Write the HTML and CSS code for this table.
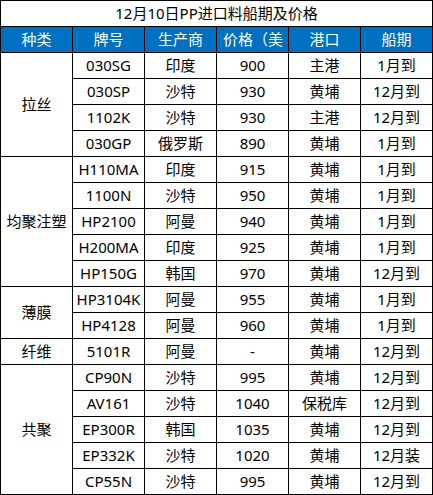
FILE: index.html
```html
<!DOCTYPE html>
<html lang="zh-CN">
<head>
  <meta charset="UTF-8" />
  <meta name="viewport" content="width=device-width, initial-scale=1.0" />
  <title>12月10日PP进口料船期及价格</title>
  <link rel="stylesheet" href="styles.css">
</head>
<body>

  <div class="sheet">
    <div class="cell title">12月10日PP进口料船期及价格</div>

    <div class="cell head">种类</div>
    <div class="cell head">牌号</div>
    <div class="cell head">生产商</div>
    <div class="cell head head-left">价格（美</div>
    <div class="cell head">港口</div>
    <div class="cell head">船期</div>

    <div class="cell group span-4">拉丝</div>
    <div class="cell">030SG</div><div class="cell">印度</div><div class="cell">900</div><div class="cell">主港</div><div class="cell">1月到</div>
    <div class="cell">030SP</div><div class="cell">沙特</div><div class="cell">930</div><div class="cell">黄埔</div><div class="cell">12月到</div>
    <div class="cell">1102K</div><div class="cell">沙特</div><div class="cell">930</div><div class="cell">主港</div><div class="cell">12月到</div>
    <div class="cell">030GP</div><div class="cell">俄罗斯</div><div class="cell">890</div><div class="cell">黄埔</div><div class="cell">1月到</div>

    <div class="cell group span-5">均聚注塑</div>
    <div class="cell">H110MA</div><div class="cell">印度</div><div class="cell">915</div><div class="cell">黄埔</div><div class="cell">1月到</div>
    <div class="cell">1100N</div><div class="cell">沙特</div><div class="cell">950</div><div class="cell">黄埔</div><div class="cell">1月到</div>
    <div class="cell">HP2100</div><div class="cell">阿曼</div><div class="cell">940</div><div class="cell">黄埔</div><div class="cell">1月到</div>
    <div class="cell">H200MA</div><div class="cell">印度</div><div class="cell">925</div><div class="cell">黄埔</div><div class="cell">1月到</div>
    <div class="cell">HP150G</div><div class="cell">韩国</div><div class="cell">970</div><div class="cell">黄埔</div><div class="cell">12月到</div>

    <div class="cell group span-2">薄膜</div>
    <div class="cell">HP3104K</div><div class="cell">阿曼</div><div class="cell">955</div><div class="cell">黄埔</div><div class="cell">1月到</div>
    <div class="cell">HP4128</div><div class="cell">阿曼</div><div class="cell">960</div><div class="cell">黄埔</div><div class="cell">1月到</div>

    <div class="cell group">纤维</div>
    <div class="cell">5101R</div><div class="cell">阿曼</div><div class="cell">-</div><div class="cell">黄埔</div><div class="cell">12月到</div>

    <div class="cell group span-5">共聚</div>
    <div class="cell">CP90N</div><div class="cell">沙特</div><div class="cell">995</div><div class="cell">黄埔</div><div class="cell">12月到</div>
    <div class="cell">AV161</div><div class="cell">沙特</div><div class="cell">1040</div><div class="cell">保税库</div><div class="cell">12月到</div>
    <div class="cell">EP300R</div><div class="cell">韩国</div><div class="cell">1035</div><div class="cell">黄埔</div><div class="cell">12月到</div>
    <div class="cell">EP332K</div><div class="cell">沙特</div><div class="cell">1020</div><div class="cell">黄埔</div><div class="cell">12月装</div>
    <div class="cell">CP55N</div><div class="cell">沙特</div><div class="cell">995</div><div class="cell">黄埔</div><div class="cell">12月到</div>
  </div>

</body>
</html>
```

FILE: styles.css
```css
* {
  box-sizing: border-box;
}
body {
  margin: 0;
  background: #fff;
  font-family: 'Noto Sans', 'Noto Sans CJK SC', sans-serif;
  font-size: 15px;
  color: #000;
}
.sheet {
  width: 433px;
  display: grid;
  grid-template-columns: repeat(6, 71px);
  grid-auto-rows: 25px;
  gap: 1px;
  padding: 1px;
  background: #000;
}
.cell {
  background: #fff;
  display: flex;
  align-items: center;
  justify-content: center;
  white-space: nowrap;
  overflow: hidden;
  line-height: 1;
}
.title {
  grid-column: 1 / -1;
}
.head {
  background: #0070c0;
  color: #fff;
}
.head-left {
  justify-content: flex-start;
  padding-left: 6px;
}
.span-2 {
  grid-row: span 2;
}
.span-4 {
  grid-row: span 4;
}
.span-5 {
  grid-row: span 5;
}
```
